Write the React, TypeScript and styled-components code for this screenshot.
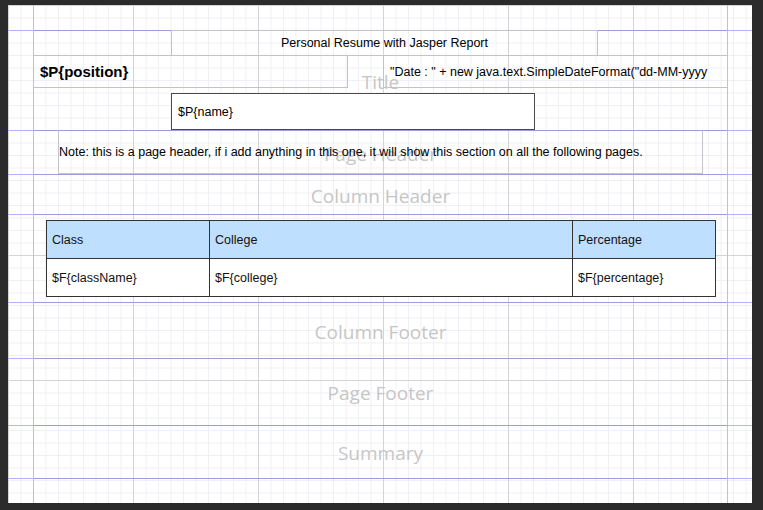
import React from 'react';
import styled, { createGlobalStyle } from 'styled-components';

const Global = createGlobalStyle`
  html, body { margin: 0; padding: 0; background: #2b2b2b; }
  body { width: 763px; height: 510px; overflow: hidden; font-family: "Liberation Sans", Arial, sans-serif; }
  * { box-sizing: border-box; }
`;

const Frame = styled.div`
  width: 763px;
  height: 510px;
  padding: 5px 11px 7px 8px;
  background: #2b2b2b;
`;

const Canvas = styled.div`
  width: 744px;
  height: 498px;
  display: flex;
  flex-direction: column;
  overflow: hidden;
  background-color: #ffffff;
  background-image:
    linear-gradient(to right, #d4d4d6 1px, transparent 1px),
    linear-gradient(to bottom, #d4d4d6 1px, transparent 1px),
    linear-gradient(to right, #f0f0f4 1px, transparent 1px),
    linear-gradient(to bottom, #f0f0f4 1px, transparent 1px);
  background-size: 125px 125px, 125px 125px, 12.5px 12.5px, 12.5px 12.5px;
`;

const Band = styled.div<{ $h: number }>`
  display: flex;
  flex: none;
  height: ${p => p.$h}px;
`;

const Gutter = styled.div<{ $w: number; $line: boolean }>`
  flex: none;
  width: ${p => p.$w}px;
  border-bottom: ${p => (p.$line ? '1px solid #b3b3fb' : 'none')};
`;

const BandBody = styled.div<{ $line: boolean }>`
  position: relative;
  flex: 1;
  display: flex;
  flex-direction: column;
  align-items: flex-start;
  border-left: 1px solid #bcbcf4;
  border-right: 1px solid #bcbcf4;
  border-bottom: ${p => (p.$line ? '1px solid #9e9ed6' : 'none')};
`;

const BandLabel = styled.div`
  position: absolute;
  inset: 0;
  display: flex;
  align-items: center;
  justify-content: center;
  padding-top: 2px;
  font-family: "Open Sans", "Noto Sans", sans-serif;
  font-size: 19px;
  color: #c6c6c6;
  pointer-events: none;
  z-index: 0;
`;

const Element = styled.div`
  position: relative;
  z-index: 1;
  display: flex;
  align-items: center;
  color: #000;
  font-size: 12.5px;
  white-space: nowrap;
  overflow: hidden;
`;

const ReportTitle = styled(Element)`
  margin: -1px 0 0 137px;
  width: 427px;
  height: 26px;
  justify-content: center;
  border: 1px solid #c2c2c8;
`;

const FieldRow = styled.div`
  display: flex;
  align-self: stretch;
  margin: -1px -1px 0 -1px;
  height: 33px;
`;

const PositionField = styled(Element)`
  width: 315px;
  padding-left: 6px;
  font-size: 15px;
  font-weight: bold;
  border: 1px solid #c2c2c8;
`;

const DateField = styled(Element)`
  flex: 1;
  margin-left: 35px;
  padding-left: 6px;
  border: 1px solid #c2c2c8;
`;

const NameField = styled(Element)`
  margin: 5px 0 0 137px;
  width: 364px;
  height: 37px;
  padding-left: 6px;
  background: #ffffff;
  border: 1px solid #4a4a4a;
`;

const NoteField = styled(Element)`
  margin: -1px 0 0 24px;
  width: 645px;
  height: 45px;
  padding-left: 0;
  border: 1px solid #c4c4cc;
  border-top-color: transparent;
`;

const Table = styled.div`
  position: relative;
  z-index: 1;
  margin: 5px 0 0 12px;
  width: 670px;
  display: grid;
  grid-template-columns: 163px 363px 142px;
  grid-template-rows: 38px 37px;
  border: 1px solid #333;
`;

const Cell = styled.div<{ $head?: boolean; $last?: boolean }>`
  display: flex;
  align-items: center;
  padding-left: 5px;
  font-size: 12.5px;
  color: #111;
  background: ${p => (p.$head ? '#bfdffe' : '#ffffff')};
  border-right: ${p => (p.$last ? 'none' : '1px solid #333')};
  border-bottom: ${p => (p.$head ? '1px solid #333' : 'none')};
`;

type BandDef = { h: number; label?: string; line: boolean; content?: React.ReactNode };

const ReportBand: React.FC<BandDef> = ({ h, label, line, content }) => (
  <Band $h={h}>
    <Gutter $w={25} $line={line} />
    <BandBody $line={line}>
      {label && <BandLabel>{label}</BandLabel>}
      {content}
    </BandBody>
    <Gutter $w={24} $line={line} />
  </Band>
);

const columns = [
  { head: 'Class', field: '$F{className}' },
  { head: 'College', field: '$F{college}' },
  { head: 'Percentage', field: '$F{percentage}' },
];

export default function App() {
  const title = (
    <>
      <ReportTitle>Personal Resume with Jasper Report</ReportTitle>
      <FieldRow>
        <PositionField>$P{'{'}position{'}'}</PositionField>
        <DateField>"Date : " + new java.text.SimpleDateFormat("dd-MM-yyyy</DateField>
      </FieldRow>
      <NameField>$P{'{'}name{'}'}</NameField>
    </>
  );

  const pageHeader = (
    <NoteField>
      Note: this is a page header, if i add anything in this one, it will show this section on all the following pages.
    </NoteField>
  );

  const detail = (
    <Table>
      {columns.map((c, i) => (
        <Cell key={'h' + i} $head $last={i === columns.length - 1}>{c.head}</Cell>
      ))}
      {columns.map((c, i) => (
        <Cell key={'d' + i} $last={i === columns.length - 1}>{c.field}</Cell>
      ))}
    </Table>
  );

  const bands: BandDef[] = [
    { h: 26, line: true },
    { h: 100, label: 'Title', line: true, content: title },
    { h: 44, label: 'Page Header', line: true, content: pageHeader },
    { h: 40, label: 'Column Header', line: true },
    { h: 88, line: true, content: detail },
    { h: 56, label: 'Column Footer', line: true },
    { h: 67, label: 'Page Footer', line: true },
    { h: 53, label: 'Summary', line: true },
    { h: 24, line: false },
  ];

  return (
    <>
      <Global />
      <Frame>
        <Canvas>
          {bands.map((b, i) => (
            <ReportBand key={i} {...b} />
          ))}
        </Canvas>
      </Frame>
    </>
  );
}
